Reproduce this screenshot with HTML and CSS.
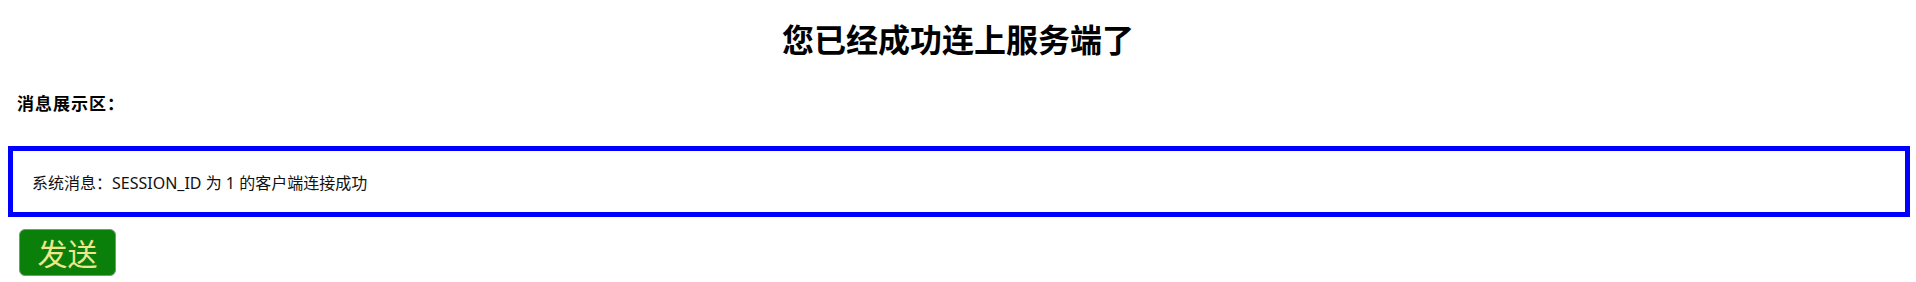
FILE: index.html
```html
<!DOCTYPE html>
<html lang="zh-CN">
<head>
<meta charset="utf-8">
<title>WebSocket</title>
<link rel="stylesheet" href="styles.css">
</head>
<body>
<div class="page">
  <h1 class="title">您已经成功连上服务端了</h1>
  <div class="label">消息展示区：</div>
  <div class="messages">
    <div class="msg">系统消息：SESSION_ID 为 1 的客户端连接成功</div>
  </div>
  <button class="send" type="button">发送</button>
</div>
</body>
</html>
```
FILE: styles.css
```css
html, body {
  margin: 0;
  padding: 0;
  background: #ffffff;
}
body {
  font-family: "Noto Sans", "Noto Sans CJK SC", sans-serif;
  color: #000;
}
.page {
  padding: 8px;
  display: flex;
  flex-direction: column;
  align-items: flex-start;
}
.title {
  align-self: stretch;
  margin: 12px 0 0;
  font-size: 32px;
  line-height: 40px;
  font-weight: 700;
  text-align: center;
}
.label {
  margin-top: 32px;
  padding-left: 9px;
  font-size: 17px;
  letter-spacing: 1px;
  line-height: 24px;
  font-weight: 700;
}
.messages {
  align-self: stretch;
  margin-top: 30px;
  margin-right: -2px;
  border: 5px solid #0000ff;
  padding: 21px 19px 19px;
  box-sizing: border-box;
  height: 71px;
}
.msg {
  font-size: 16px;
  line-height: 22px;
  color: #111;
}
.send {
  margin: 12px 0 0 11px;
  width: 97px;
  height: 47px;
  padding: 0 0 2px;
  background: #0a800a;
  color: #f0e68c;
  border: 1px solid #7a9a7a;
  border-radius: 6px;
  font-family: "Noto Sans CJK SC", sans-serif;
  font-size: 30px;
  line-height: 1;
}
```
